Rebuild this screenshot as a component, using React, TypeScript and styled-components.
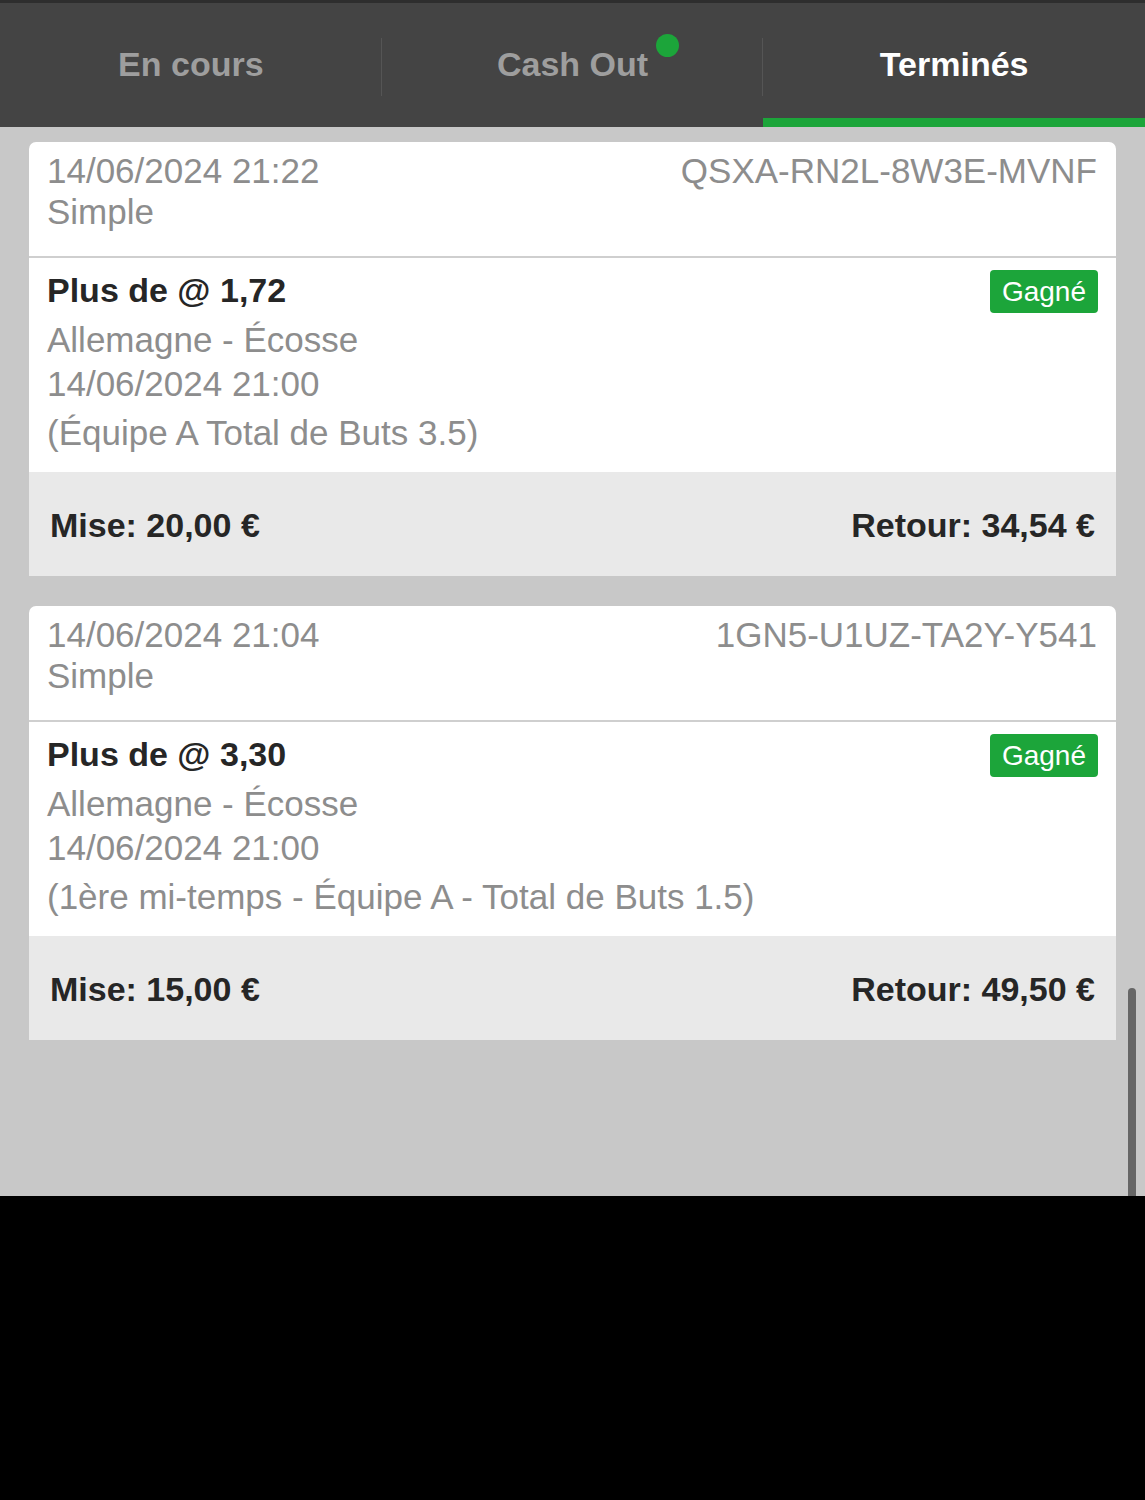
import styled, { createGlobalStyle } from 'styled-components';

// page base
const GlobalStyle = createGlobalStyle`
  html, body {
    margin: 0;
    padding: 0;
    background: #000;
  }
  body {
    font-family: "Liberation Sans", Arial, Helvetica, sans-serif;
  }
`

const Screen = styled.div`
  position: relative;
  height: 1196px;
  background: #c8c8c8;
  display: flex;
  flex-direction: column;
  overflow: hidden;
`

const TabBar = styled.nav`
  display: flex;
  height: 124px;
  border-top: 3px solid #2e2e2e;
  background: #444444;
  flex-shrink: 0;
`

const Tab = styled.div<{ active: boolean; divider: boolean }>`
  position: relative;
  flex: 1;
  display: flex;
  align-items: center;
  justify-content: center;
  padding-top: 7px;
  font-size: 34px;
  line-height: 40px;
  font-weight: 700;
  color: ${({ active }) => (active ? '#ffffff' : '#9e9e9e')};
  border-bottom: 9px solid ${({ active }) => (active ? '#1ca53a' : 'transparent')};
  &::after {
    content: '';
    display: ${({ divider }) => (divider ? 'block' : 'none')};
    position: absolute;
    right: 0;
    top: 35px;
    height: 58px;
    width: 1px;
    background: #555555;
  }
`

const TabLabel = styled.span`
  position: relative;
  display: block;
`

const Dot = styled.span`
  position: absolute;
  right: -31px;
  top: -10px;
  width: 23px;
  height: 23px;
  border-radius: 50%;
  background: #1ca53a;
`

const List = styled.main`
  display: flex;
  flex-direction: column;
  gap: 30px;
  padding: 15px 29px 0;
`

const Card = styled.section`
  border-radius: 7px 7px 0 0;
  overflow: hidden;
  background: #fff;
`

const CardHead = styled.header`
  height: 116px;
  box-sizing: border-box;
  padding: 8px 19px 0 18px;
  display: flex;
  justify-content: space-between;
  border-bottom: 2px solid #cfcfcf;
  font-size: 35px;
  line-height: 41px;
  color: #8d8d8d;
`

const HeadLeft = styled.div`
  display: flex;
  flex-direction: column;
`

const CardBody = styled.div`
  position: relative;
  height: 214px;
  box-sizing: border-box;
  padding: 12px 18px 0;
`

const Title = styled.div`
  font-size: 34px;
  line-height: 40px;
  font-weight: 700;
  color: #262626;
  margin-bottom: 8px;
`

const Info = styled.div<{ gap?: number }>`
  font-size: 35px;
  line-height: 44px;
  color: #8d8d8d;
  margin-top: ${({ gap }) => gap ?? 0}px;
`

const Badge = styled.span`
  position: absolute;
  top: 12px;
  right: 18px;
  height: 43px;
  padding: 0 12px;
  display: flex;
  align-items: center;
  border-radius: 4px;
  background: #1ca53a;
  color: #fff;
  font-size: 28px;
`

const CardFoot = styled.footer`
  height: 101px;
  display: flex;
  align-items: center;
  justify-content: space-between;
  padding: 3px 21px 0;
  background: #e9e9e9;
  font-size: 34px;
  font-weight: 700;
  color: #262626;
`

const ScrollThumb = styled.div`
  position: absolute;
  right: 9px;
  top: 988px;
  width: 8px;
  height: 240px;
  border-radius: 4px;
  background: #666666;
`

interface Bet {
  placed: string
  code: string
  odds: string
  market: string
  stake: string
  payout: string
}

const bets: Bet[] = [
  {
    placed: '14/06/2024 21:22',
    code: 'QSXA-RN2L-8W3E-MVNF',
    odds: '1,72',
    market: '(Équipe A Total de Buts 3.5)',
    stake: '20,00',
    payout: '34,54',
  },
  {
    placed: '14/06/2024 21:04',
    code: '1GN5-U1UZ-TA2Y-Y541',
    odds: '3,30',
    market: '(1ère mi-temps - Équipe A - Total de Buts 1.5)',
    stake: '15,00',
    payout: '49,50',
  },
]

const App = () => {
  return (
    <>
      <GlobalStyle />
      <Screen>
        <TabBar>
          <Tab active={false} divider={true}>En cours</Tab>
          <Tab active={false} divider={true}>
            <TabLabel>
              Cash Out
              <Dot />
            </TabLabel>
          </Tab>
          <Tab active={true} divider={false}>Terminés</Tab>
        </TabBar>
        <List>
          {bets.map((bet) => (
            <Card key={bet.code}>
              <CardHead>
                <HeadLeft>
                  <span>{bet.placed}</span>
                  <span>Simple</span>
                </HeadLeft>
                <span>{bet.code}</span>
              </CardHead>
              <CardBody>
                <Title>Plus de @ {bet.odds}</Title>
                <Info>Allemagne - Écosse</Info>
                <Info>14/06/2024 21:00</Info>
                <Info gap={5}>{bet.market}</Info>
                <Badge>Gagné</Badge>
              </CardBody>
              <CardFoot>
                <span>Mise: {bet.stake} €</span>
                <span>Retour: {bet.payout} €</span>
              </CardFoot>
            </Card>
          ))}
        </List>
        <ScrollThumb />
      </Screen>
    </>
  );
}

export default App;
